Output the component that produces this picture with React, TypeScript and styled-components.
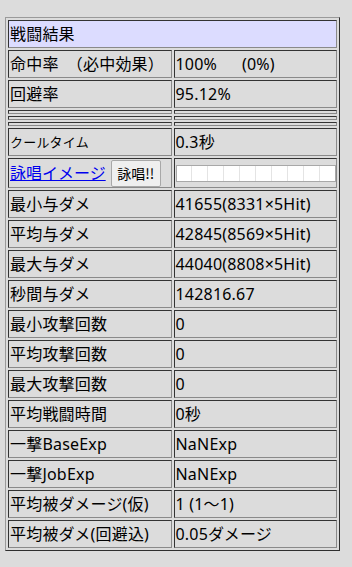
import React from 'react';
import styled, { createGlobalStyle } from 'styled-components';

type StatRow = { label: string; value: string };

const damageRows: StatRow[] = [
	{ label: '最小与ダメ', value: '41655(8331×5Hit)' },
	{ label: '平均与ダメ', value: '42845(8569×5Hit)' },
	{ label: '最大与ダメ', value: '44040(8808×5Hit)' },
	{ label: '秒間与ダメ', value: '142816.67' },
	{ label: '最小攻撃回数', value: '0' },
	{ label: '平均攻撃回数', value: '0' },
	{ label: '最大攻撃回数', value: '0' },
	{ label: '平均戦闘時間', value: '0秒' },
	{ label: '一撃BaseExp', value: 'NaNExp' },
	{ label: '一撃JobExp', value: 'NaNExp' },
	{ label: '平均被ダメージ(仮)', value: '1 (1～1)' },
	{ label: '平均被ダメ(回避込)', value: '0.05ダメージ' },
];

const CAST_SEGMENTS = 10;

function App() {
	return (
		<>
			<GlobalStyle />
			<Page>
				<ResultTable>
					<tbody>
						<tr>
							<HeaderCell colSpan={2}>戦闘結果</HeaderCell>
						</tr>
						<tr>
							<LabelCell>命中率　（必中効果）</LabelCell>
							<ValueCell>100%　&nbsp;&nbsp;(0%)</ValueCell>
						</tr>
						<tr>
							<LabelCell>回避率</LabelCell>
							<ValueCell>95.12%</ValueCell>
						</tr>
						{[0, 1, 2].map(i => (
							<tr key={i}>
								<SpacerCell $left />
								<SpacerCell />
							</tr>
						))}
						<tr>
							<LabelCell $small>クールタイム</LabelCell>
							<ValueCell>0.3秒</ValueCell>
						</tr>
						<tr>
							<CastCell>
								<CastLink href="#">詠唱イメージ</CastLink>
								<CastButton type="button">詠唱!!</CastButton>
							</CastCell>
							<ValueCell>
								<CastGauge>
									{Array.from({ length: CAST_SEGMENTS }, (_, i) => (
										<GaugeSegment key={i} />
									))}
								</CastGauge>
							</ValueCell>
						</tr>
						{damageRows.map(row => (
							<tr key={row.label}>
								<LabelCell>{row.label}</LabelCell>
								<ValueCell>{row.value}</ValueCell>
							</tr>
						))}
					</tbody>
				</ResultTable>
			</Page>
		</>
	);
}

export default App;

const GlobalStyle = createGlobalStyle`
	html, body {
		margin: 0;
		background: #dcdcdc;
		font-family: "Noto Sans", "Noto Sans CJK JP", sans-serif;
		color: #000;
	}
`;

const Page = styled.div`
	padding: 17px 0 0 5px;
	min-height: 567px;
	box-sizing: border-box;
`;

const ResultTable = styled.table`
	width: 335px;
	box-sizing: border-box;
	table-layout: fixed;
	border-collapse: separate;
	border-spacing: 2px;
	border: 1px solid;
	border-color: #9a9a9a #2e2e2e #2e2e2e #9a9a9a;
`;

const Cell = styled.td`
	box-sizing: border-box;
	padding: 1px;
	border: 1px solid;
	border-color: #333 #8a8a8a #8a8a8a #333;
	font-size: 16px;
	line-height: 24px;
	height: 28px;
	white-space: nowrap;
	overflow: hidden;
	vertical-align: middle;
	letter-spacing: 0.2px;
`;

const HeaderCell = styled(Cell)`
	background: #dcdcff;
`;

const LabelCell = styled(Cell)<{ $small?: boolean }>`
	width: 165px;
	font-size: ${p => (p.$small ? '13px' : '16px')};
`;

const ValueCell = styled(Cell)`
	width: 162px;
`;

const SpacerCell = styled.td<{ $left?: boolean }>`
	box-sizing: border-box;
	width: ${p => (p.$left ? '165px' : '162px')};
	height: 4px;
	padding: 0;
	border: 1px solid;
	border-color: #333 #8a8a8a #8a8a8a #333;
`;

const CastCell = styled(Cell)`
	height: 30px;
	padding: 0 1px;
	letter-spacing: 0;
`;

const CastLink = styled.a`
	color: #0000ee;
	text-decoration: underline;
	vertical-align: middle;
`;

const CastButton = styled.button`
	margin-left: 5px;
	width: 50px;
	height: 27px;
	padding: 0;
	vertical-align: middle;
	font-family: "Noto Sans CJK JP", sans-serif;
	font-size: 14px;
	color: #000;
	background: #efefef;
	border: 1px solid #a8a8a8;
	border-radius: 2px;
`;

const CastGauge = styled.div`
	display: flex;
	width: 160px;
	height: 17px;
	box-sizing: border-box;
	border: 1px solid #a8a8a8;
	background: #fff;
`;

const GaugeSegment = styled.div`
	flex: 1;
	border-right: 1px solid #e4e4e4;

	&:last-child {
		border-right: none;
	}
`;
